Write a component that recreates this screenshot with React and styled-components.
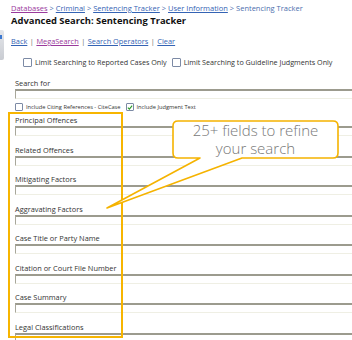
import React from 'react';
import styled, { createGlobalStyle } from 'styled-components';

const GlobalStyle = createGlobalStyle`
  html, body {
    margin: 0;
    padding: 0;
    background: #fff;
    overflow: hidden;
  }
  body {
    font-family: "Open Sans", "DejaVu Sans", sans-serif;
    color: #333;
  }
`;

const crumbs = [
  { text: 'Databases', visited: true },
  { text: 'Criminal' },
  { text: 'Sentencing Tracker' },
  { text: 'User Information' },
  { text: 'Sentencing Tracker', current: true },
];

const fields = [
  'Principal Offences',
  'Related Offences',
  'Mitigating Factors',
  'Aggravating Factors',
  'Case Title or Party Name',
  'Citation or Court File Number',
  'Case Summary',
  'Legal Classifications',
];

function Box({ checked, small }) {
  return (
    <Check small={small}>
      {checked && (
        <svg width="7" height="7" viewBox="0 0 7 7">
          <path d="M1 3.6 L2.8 5.4 L6 1.4" fill="none" stroke="#2a9a2a" strokeWidth="1.3" />
        </svg>
      )}
    </Check>
  );
}

function App() {
  return (
    <Page>
      <GlobalStyle />
      <EdgeTab />
      <Crumbs>
        {crumbs.map((c, i) => (
          <React.Fragment key={i}>
            {i > 0 && <Sep> &gt; </Sep>}
            {c.current ? <Sep>{c.text}</Sep> : <Link visited={c.visited}>{c.text}</Link>}
          </React.Fragment>
        ))}
      </Crumbs>
      <Title>Advanced Search: Sentencing Tracker</Title>
      <Links>
        <Link>Back</Link>
        <Pipe>|</Pipe>
        <Link visited>MegaSearch</Link>
        <Pipe>|</Pipe>
        <Link>Search Operators</Link>
        <Pipe>|</Pipe>
        <Link>Clear</Link>
      </Links>
      <Limits>
        <Option><Box />Limit Searching to Reported Cases Only</Option>
        <Option><Box />Limit Searching to Guideline Judgments Only</Option>
      </Limits>
      <SearchBlock>
        <Label>Search for</Label>
        <Input />
        <Includes>
          <SmallOption><Box small />Include Citing References - CiteCase</SmallOption>
          <SmallOption><Box small checked />Include Judgment Text</SmallOption>
        </Includes>
      </SearchBlock>
      <Fields>
        {fields.map((f) => (
          <Field key={f}>
            <Label>{f}</Label>
            <Input />
          </Field>
        ))}
      </Fields>
      <Callout>
        <svg width="352" height="340" viewBox="0 0 352 340">
          <path
            d="M178 121 H333 Q338 121 338 126 V153 Q338 158 333 158 H242 L107 208 L200 158 H178 Q173 158 173 153 V126 Q173 121 178 121 Z"
            fill="#fff"
            stroke="#f5b300"
            strokeWidth="1.6"
            strokeLinejoin="round"
          />
        </svg>
        <CalloutText>25+ fields to refine<br />your search</CalloutText>
      </Callout>
    </Page>
  );
}

export default App;

const Page = styled.div`
  position: relative;
  width: 352px;
  height: 340px;
  overflow: hidden;
  padding: 3px 0 0 11px;
  box-sizing: border-box;
`;

const EdgeTab = styled.div`
  position: absolute;
  left: 0;
  top: 30px;
  width: 4px;
  height: 30px;
  background: linear-gradient(180deg, #e4e6ea, #c9ccd2);
  border-radius: 0 2px 2px 0;
  &:before {
    content: "";
    position: absolute;
    left: 0;
    top: 5px;
    width: 2px;
    height: 4px;
    background: #3b78d0;
  }
`;

const Crumbs = styled.div`
  font-size: 7.5px;
  line-height: 10px;
  white-space: nowrap;
`;

const Link = styled.a`
  color: ${(p) => (p.visited ? '#9a3a9c' : '#3463b4')};
  text-decoration: underline;
  cursor: pointer;
`;

const Sep = styled.span`
  color: #4c6fae;
`;

const Title = styled.h1`
  margin: 2px 0 0;
  font-size: 9.4px;
  line-height: 12px;
  font-weight: 700;
  color: #111;
`;

const Links = styled.div`
  margin-top: 9px;
  font-size: 7.4px;
  line-height: 10px;
  white-space: nowrap;
`;

const Pipe = styled.span`
  color: #666;
  margin: 0 2.5px;
`;

const Limits = styled.div`
  display: flex;
  gap: 5px;
  margin: 11px 0 0 12px;
  white-space: nowrap;
`;

const Option = styled.label`
  display: flex;
  align-items: center;
  gap: 3px;
  font-size: 7.2px;
  line-height: 10px;
  color: #333;
`;

const Check = styled.span`
  display: inline-flex;
  align-items: center;
  justify-content: center;
  flex: none;
  width: ${(p) => (p.small ? 6 : 7)}px;
  height: ${(p) => (p.small ? 6 : 7)}px;
  border: 1px solid #7c8aa5;
  border-radius: 1px;
  background: #fff;
`;

const SearchBlock = styled.div`
  margin: 11px 0 0 4px;
`;

const Label = styled.div`
  font-size: 7.4px;
  line-height: 10px;
  color: #333;
  white-space: nowrap;
`;

const Input = styled.div`
  margin-top: 1px;
  width: 400px;
  height: 10px;
  box-sizing: border-box;
  border-top: 2px solid #9c9b8e;
  border-left: 1px solid #a8a79a;
  border-bottom: 1px solid #efefe4;
  background: #fff;
`;

const Includes = styled.div`
  display: flex;
  gap: 5px;
  margin-top: 4px;
  white-space: nowrap;
`;

const SmallOption = styled.label`
  display: flex;
  align-items: center;
  gap: 3px;
  font-size: 5.7px;
  line-height: 8px;
  color: #333;
`;

const Fields = styled.div`
  position: relative;
  margin: 1px 0 0 -3px;
  padding: 3px 0 0 7px;
  height: 226px;
  box-sizing: border-box;

  &:after {
    content: "";
    position: absolute;
    left: 0;
    top: 0;
    width: 115px;
    height: 226px;
    box-sizing: border-box;
    border: 2px solid #f7b500;
    pointer-events: none;
  }
`;

const Field = styled.div`
  height: 29.5px;
`;

const Callout = styled.div`
  position: absolute;
  left: 0;
  top: 0;
  width: 352px;
  height: 340px;
  pointer-events: none;

  svg {
    position: absolute;
    left: 0;
    top: 0;
  }
`;

const CalloutText = styled.div`
  position: absolute;
  left: 173px;
  top: 121px;
  width: 165px;
  text-align: center;
  font-family: "Open Sans", sans-serif;
  font-weight: 300;
  font-size: 15px;
  line-height: 18px;
  color: #787878;
`;
